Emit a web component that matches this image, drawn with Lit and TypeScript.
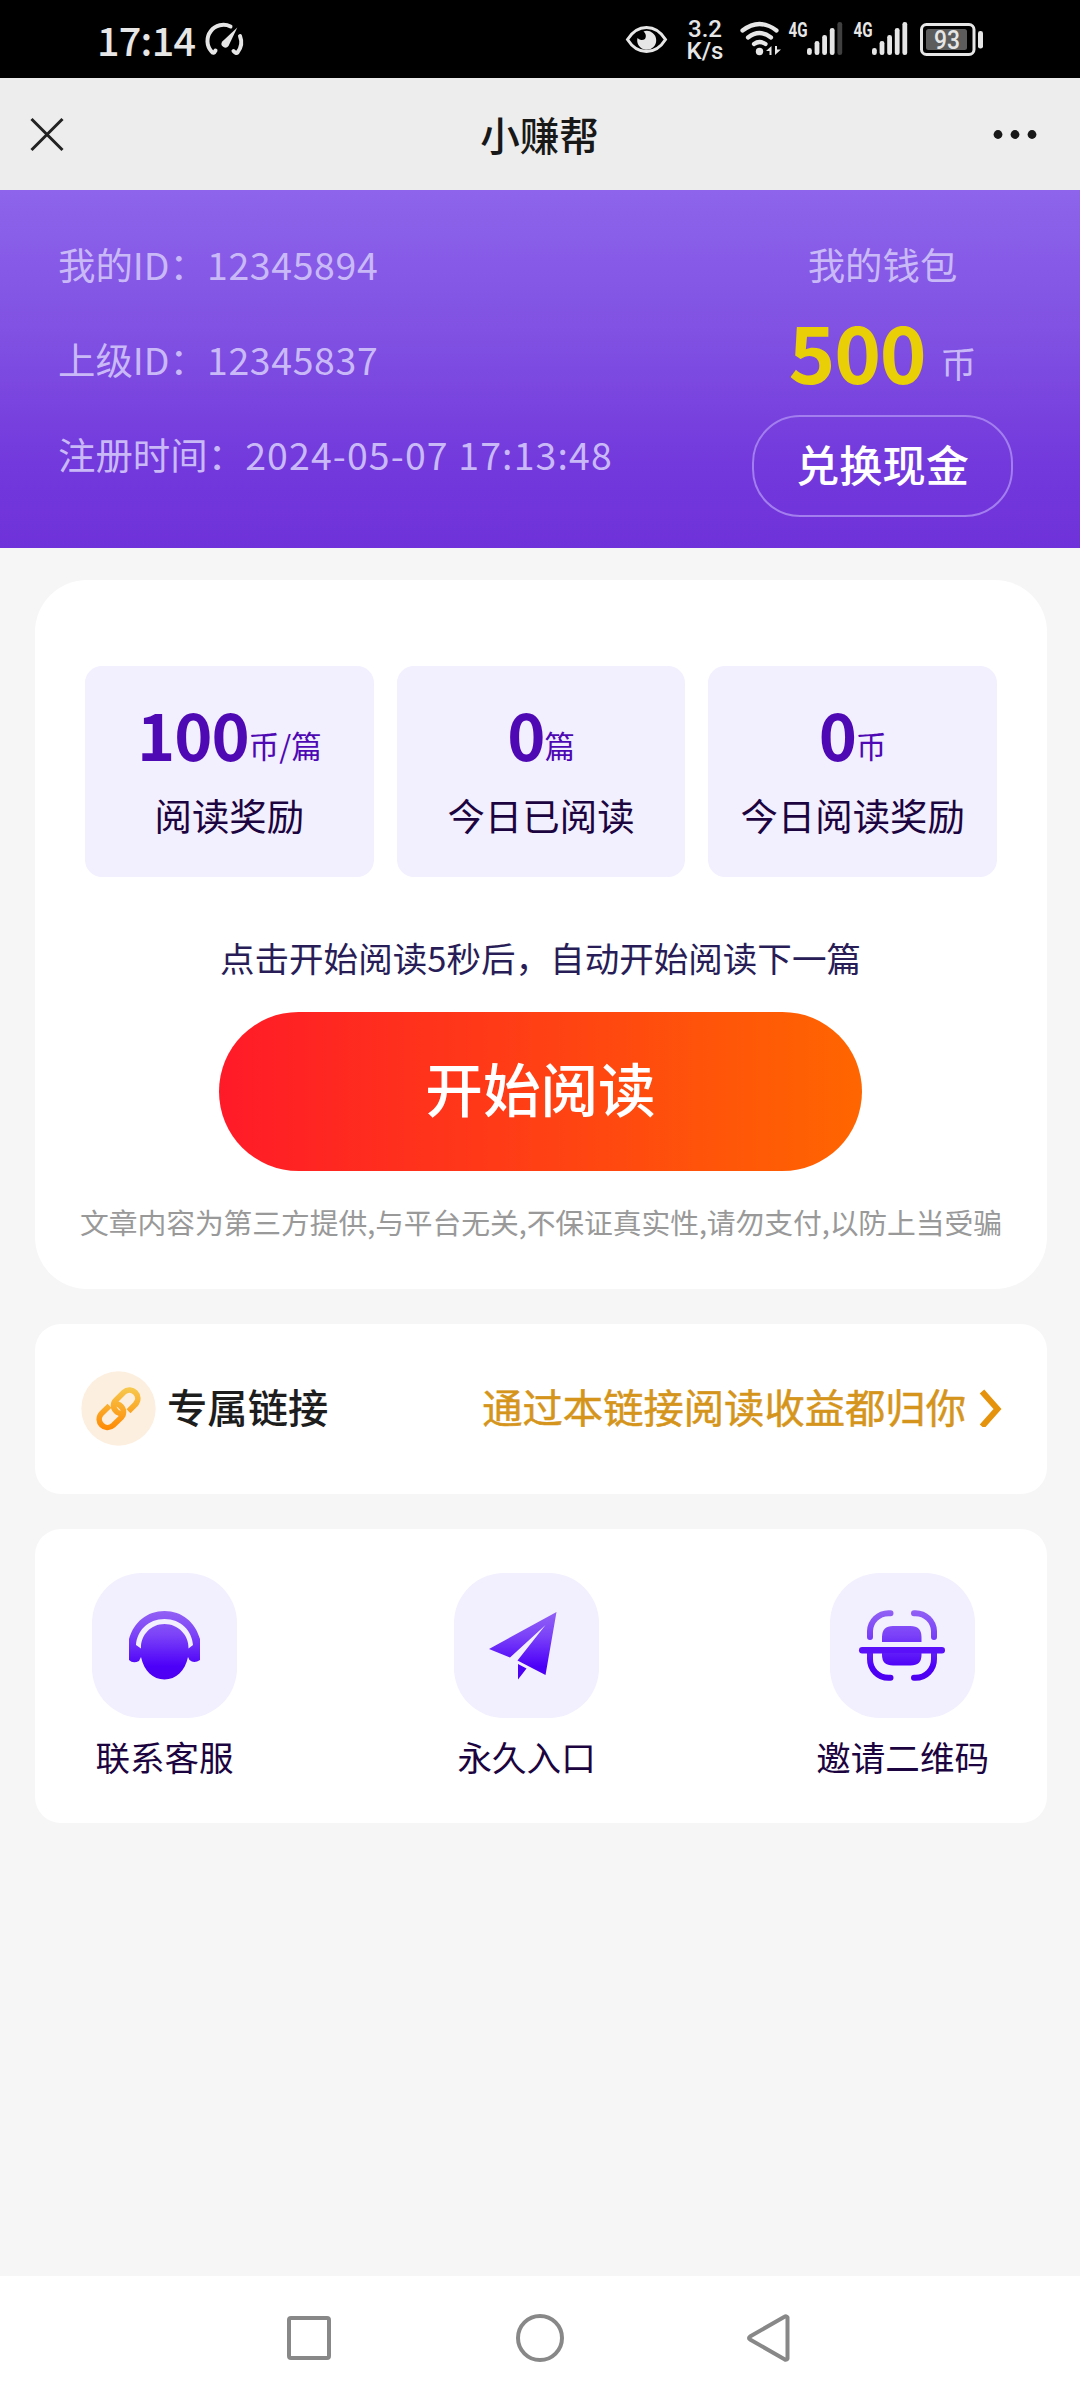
import { LitElement, html, css, svg } from "lit";
import { customElement, property } from "lit/decorators.js";

const purple = (id: string, y1: number, y2: number) => svg`
  <defs>
    <linearGradient id=${id} gradientUnits="userSpaceOnUse" x1="0" y1=${y1} x2="0" y2=${y2}>
      <stop offset="0" stop-color="#9261f5"></stop>
      <stop offset="0.35" stop-color="#7b42f8"></stop>
      <stop offset="0.8" stop-color="#4d00f8"></stop>
      <stop offset="1" stop-color="#4d00f0"></stop>
    </linearGradient>
  </defs>`;

@customElement("status-bar")
class StatusBar extends LitElement {
  static styles = css`
    :host { display: block; background: #000; }
    .bar { display: block; width: 1080px; height: 78px; }
    .t { font-family: "Noto Sans CJK SC", sans-serif; fill: #e6e6e6; }
    .clock { font-size: 39.5px; font-weight: 500; }
    .rate { font-size: 24px; font-weight: 500; font-family: Roboto, sans-serif; }
    .net { font-size: 20px; font-weight: 700; font-family: Roboto, sans-serif; }
    .pct { font-size: 25px; font-weight: 500; font-family: Roboto, sans-serif; }
  `;
  private signal(x: number, full: boolean) {
    const tops = [48, 41, 35, 28, 22];
    return tops.map(
      (y, i) => svg`<rect x=${x + i * 7.6} y=${y} width="4.8" height=${55 - y} rx="2.3"
        fill=${i === 4 && !full ? "#404040" : "#e6e6e6"}></rect>`
    );
  }
  render() {
    return html`<svg class="bar" viewBox="0 0 1080 78">
      <text class="t clock" x="97" y="55.5" textLength="99" lengthAdjust="spacing">17:14</text>
      <g fill="none" stroke="#e6e6e6" stroke-width="4" stroke-linecap="round">
        <path d="M215.500 50.500 Q213.500 54.500 211.500 51.500 A16 16 0 0 1 230.500 26.500"></path>
        <path d="M240 36 Q243.500 45 237.500 52.500 Q236 54 233.500 51"></path>
      </g>
      <path d="M237.300 27.600 L228.500 46 A3.700 3.700 0 1 1 222.300 41.500 Z" fill="#e6e6e6"></path>
      <path d="M627.500 39.500 Q635 27.500 646.500 27.500 T665.500 39.500 Q658 51.500 646.500 51.500 T627.500 39.500 Z"
        fill="none" stroke="#e6e6e6" stroke-width="3"></path>
      <path d="M645 31 A9.500 9.500 0 1 1 637.500 38 A5.600 5.600 0 0 0 645 39 A5.500 5.500 0 0 0 643.500 31.500 Z" fill="#e6e6e6"></path>
      <text class="t rate"><tspan x="688" y="36.500">3.2</tspan><tspan x="686.500" y="59">K/s</tspan></text>
      <g fill="none" stroke="#e6e6e6" stroke-width="4.200" stroke-linecap="round">
        <path d="M742.500 30.500 Q759.500 17.500 776.500 30.500"></path>
        <path d="M748 37.500 Q759.500 28.500 771 37.500"></path>
        <path d="M754 44 Q759.500 40 765.500 44"></path>
      </g>
      <circle cx="759.500" cy="51.500" r="3.700" fill="#e6e6e6"></circle>
      <path d="M766 51 L771.500 46 V55 H769.500 V51 Z M775 46 V55 L781 49.500 H777 V46 Z" fill="#e6e6e6"></path>
      <text class="t net" x="788.500" y="36.500" textLength="19" lengthAdjust="spacingAndGlyphs">4G</text>
      ${this.signal(807, false)}
      <text class="t net" x="853.500" y="36.500" textLength="19" lengthAdjust="spacingAndGlyphs">4G</text>
      ${this.signal(872, true)}
      <rect x="921.500" y="24.500" width="52.500" height="30" rx="5" fill="none" stroke="#e6e6e6" stroke-width="3"></rect>
      <rect x="926" y="29" width="41" height="21" rx="2.500" fill="#5c5c5c"></rect>
      <rect x="978" y="31" width="5" height="17.500" rx="2.300" fill="#e6e6e6"></rect>
      <text class="t pct" x="934" y="48.800" textLength="26" lengthAdjust="spacingAndGlyphs">93</text>
    </svg>`;
  }
}

@customElement("title-bar")
class TitleBar extends LitElement {
  static styles = css`
    :host { display: block; }
    .bar { display: flex; align-items: center; justify-content: space-between; box-sizing: border-box;
      height: 112px; padding: 0 40px 0 28px; background: #ededed; }
    .side { width: 48px; height: 38px; }
    .name { font-size: 39.6px; line-height: 60px; font-weight: 500; color: #181818; padding-left: 11px; }
  `;
  render() {
    return html`<div class="bar">
      <svg class="side" viewBox="0 0 48 38"><path d="M3.500 4 L34.500 35 M34.500 4 L3.500 35" stroke="#222" stroke-width="3" fill="none"></path></svg>
      <span class="name">小赚帮</span>
      <svg class="side" viewBox="0 0 48 38" fill="#181818"><circle cx="6" cy="19.500" r="4.400"></circle><circle cx="23" cy="19.500" r="4.400"></circle><circle cx="40" cy="19.500" r="4.400"></circle></svg>
    </div>`;
  }
}

@customElement("account-header")
class AccountHeader extends LitElement {
  static styles = css`
    :host { display: block; }
    .head { display: flex; justify-content: space-between; box-sizing: border-box; height: 358px;
      padding: 25px 67px 0 58px; color: #c9b9f7;
      background: linear-gradient(#8d64eb 0%, #8152e3 38%, #7339dc 76%, #6f32da 100%); }
    .rows { display: flex; flex-direction: column; padding-top: 1.5px; }
    .row { font-size: 37.44px; line-height: 95px; white-space: pre; }
    .num { letter-spacing: 0.65px; }
    .date { letter-spacing: 1.15px; }
    .wallet { display: flex; flex-direction: column; align-items: center; width: 261px; padding-top: 19px; }
    .label { font-size: 37.44px; line-height: 60px; }
    .amount { display: flex; align-items: baseline; gap: 15px; margin-top: 11px; height: 90px; line-height: 90px; }
    .coins { font-size: 79.5px; font-weight: 700; letter-spacing: -1.2px; color: #e9cf05; }
    .unit { font-size: 36px; line-height: 60px; padding-bottom: 3px; align-self: flex-end; }
    .cash { box-sizing: border-box; width: 261px; height: 102px; margin-top: 20px; border: 2px solid #a37eee;
      border-radius: 48px; color: #fff; font: inherit; font-size: 43.2px; font-weight: 500; background: none;
      padding: 0 0 6px; text-align: center; }
  `;
  render() {
    const rows = [
      ["我的ID：", "12345894", "num"],
      ["上级ID：", "12345837", "num"],
      ["注册时间：", "2024-05-07 17:13:48", "date"],
    ];
    return html`<div class="head">
      <div class="rows">${rows.map(([k, v, c]) => html`<div class="row">${k}<span class=${c}>${v}</span></div>`)}</div>
      <div class="wallet">
        <div class="label">我的钱包</div>
        <div class="amount"><span class="coins">500</span><span class="unit">币</span></div>
        <button class="cash">兑换现金</button>
      </div>
    </div>`;
  }
}

@customElement("stat-tile")
class StatTile extends LitElement {
  @property() value = "";
  @property() unit = "";
  @property() label = "";
  static styles = css`
    :host { display: block; flex: 1; }
    .tile { display: flex; flex-direction: column; align-items: center; box-sizing: border-box; height: 211px;
      padding-top: 27px; border-radius: 17px; background: #f2effe; }
    .top { display: flex; height: 80px; color: #4e08b4; }
    .value { font-size: 64.8px; line-height: 80px; font-weight: 700; letter-spacing: -1px; }
    .unit { font-size: 30.5px; line-height: 104px; height: 80px; }
    .label { font-size: 37.44px; line-height: 60px; margin-top: 12px; color: #1c0440; white-space: nowrap; }
  `;
  render() {
    return html`<div class="tile">
      <div class="top"><span class="value">${this.value}</span><span class="unit">${this.unit}</span></div>
      <div class="label">${this.label}</div>
    </div>`;
  }
}

@customElement("reading-card")
class ReadingCard extends LitElement {
  static styles = css`
    :host { display: block; }
    .card { display: flex; flex-direction: column; align-items: center; box-sizing: border-box; height: 709px;
      padding-top: 86px; border-radius: 52px; background: #fff; }
    .stats { display: flex; gap: 23px; width: 912px; }
    .tip { font-size: 34.56px; line-height: 60px; margin: 50px 1px 0 0; color: #281d57; white-space: nowrap; }
    .start { width: 643px; height: 159px; margin: 25px 1px 0 0; border: 0; border-radius: 80px; padding: 0 0 9px;
      font: inherit; font-size: 57.6px; font-weight: 500; color: #fff;
      background: linear-gradient(90deg, #ff1a28, #ff6600); }
    .note { font-size: 28.8px; line-height: 44px; margin-top: 29px; letter-spacing: -0.08px; color: #999; white-space: nowrap; }
  `;
  render() {
    return html`<section class="card">
      <div class="stats">
        <stat-tile value="100" unit="币/篇" label="阅读奖励"></stat-tile>
        <stat-tile value="0" unit="篇" label="今日已阅读"></stat-tile>
        <stat-tile value="0" unit="币" label="今日阅读奖励"></stat-tile>
      </div>
      <div class="tip">点击开始阅读5秒后，自动开始阅读下一篇</div>
      <button class="start">开始阅读</button>
      <div class="note">文章内容为第三方提供,与平台无关,不保证真实性,请勿支付,以防上当受骗</div>
    </section>`;
  }
}

@customElement("link-card")
class LinkCard extends LitElement {
  static styles = css`
    :host { display: block; }
    .card { display: flex; align-items: center; box-sizing: border-box; height: 170px; padding: 0 45px 2px 46px;
      border-radius: 26px; background: #fff; font-size: 40.32px; line-height: 60px; }
    .icon { width: 75px; height: 75px; }
    .name { margin-left: 11px; padding-bottom: 4px; font-weight: 500; color: #1d1d1d; }
    .hint { margin-left: auto; padding-bottom: 4px; color: #d5951c; -webkit-text-stroke: 0.5px #d5951c; }
    .arrow { width: 24px; height: 38px; margin-left: 12px; }
  `;
  render() {
    return html`<section class="card">
      <svg class="icon" viewBox="0 0 75 75">
        <defs><linearGradient id="gold" gradientUnits="userSpaceOnUse" x1="0" y1="15" x2="0" y2="60">
          <stop offset="0" stop-color="#f6cb52"></stop><stop offset="1" stop-color="#ff8800"></stop></linearGradient></defs>
        <circle cx="37.500" cy="37.500" r="37.200" fill="#fdefdf"></circle>
        <g fill="none" stroke="url(#gold)" stroke-width="5.600">
          <path d="M40.500 43.200 L36.200 41.200 C31.500 37.500 31.500 32.500 34.800 29.200 L42.800 21.300 C50.500 14.300 62 25 54.200 33.500 L47.500 40.200"></path>
          <path d="M34.800 32.200 L38.800 34.200 C43.500 38 43.500 43 40.200 46.500 L32.200 54.300 C24.500 61.300 13 50.500 20.800 42.200 L28.500 34.800"></path>
        </g>
      </svg>
      <span class="name">专属链接</span>
      <span class="hint">通过本链接阅读收益都归你</span>
      <svg class="arrow" viewBox="0 0 24 38"><path d="M4 2.500 L19.500 20 L4 37.500" fill="none" stroke="#e5930c" stroke-width="6"></path></svg>
    </section>`;
  }
}

@customElement("menu-card")
class MenuCard extends LitElement {
  static styles = css`
    :host { display: block; }
    .card { display: flex; justify-content: space-between; box-sizing: border-box; height: 294px;
      padding: 44px 58px 0 57px; border-radius: 26px; background: #fff; }
    .item { display: flex; flex-direction: column; align-items: center; }
    .tile { width: 145px; height: 145px; border-radius: 50px; background: #f2effe; }
    .label { font-size: 34.56px; line-height: 54px; margin-top: 11px; color: #1c0440; white-space: nowrap; }
  `;
  render() {
    const headset = svg`${purple("ga", 38, 107)}
      <path fill="url(#ga)" d="M37 66 C42 49 55 38 72.500 38 C90 38 103 49 108 66 V87 Q102 91 97.500 87 L96 84 C93 98 84 106.500 72.500 106.500 C61 106.500 52 98 49 84 L47 88 Q41 91 37 87 Z"></path>
      <path fill="#f2effe" d="M44 72 C45 58 56 46 72.500 46 C89 46 100 58 101 72 L96.500 75.500 C97 62 86 51 72.500 51 C59 51 48.500 62 49 75.500 Z"></path>`;
    const plane = svg`${purple("gb", 39, 107)}
      <path fill="url(#gb)" d="M35 76 L102.500 39 L91.500 102 L63.500 87.500 L91.500 52 L56 84.500 Z M64 91 L72.500 95.500 L64 106.500 Z"></path>`;
    const scan = svg`${purple("gc", 37, 108)}
      <g fill="none" stroke="url(#gc)" stroke-width="6" stroke-linecap="round">
        <path d="M40 64 V58 A18.500 18.500 0 0 1 58.500 40.200 H60.500"></path>
        <path d="M84 40.200 H85.500 A18.500 18.500 0 0 1 104 58 V64"></path>
        <path d="M40 79 V86 A18.500 18.500 0 0 0 58.500 104.800 H60.500"></path>
        <path d="M84 104.800 H85.500 A18.500 18.500 0 0 0 104 86 V79"></path>
      </g>
      <rect x="29" y="74" width="86" height="6.500" rx="3.200" fill="#5a10f9"></rect>
      <path fill="url(#gc)" d="M52 69 V64 Q52 53 63 53 H80.500 Q91.500 53 91.500 64 V69 Z M52 80 H91.500 V82 Q91.500 92.500 80.500 92.500 H63 Q52 92.500 52 82 Z"></path>`;
    const items = [
      { icon: headset, label: "联系客服" },
      { icon: plane, label: "永久入口" },
      { icon: scan, label: "邀请二维码" },
    ];
    return html`<section class="card">${items.map(
      (i) => html`<div class="item"><svg class="tile" viewBox="0 0 145 145">${i.icon}</svg><span class="label">${i.label}</span></div>`
    )}</section>`;
  }
}

@customElement("system-nav")
class SystemNav extends LitElement {
  static styles = css`
    :host { display: block; }
    .nav { display: flex; justify-content: center; align-items: center; gap: 180px; height: 124px; background: #fff; }
    .key { width: 50px; height: 50px; fill: none; stroke: #888; stroke-width: 4; stroke-linejoin: round; }
  `;
  render() {
    return html`<nav class="nav">
      <svg class="key" viewBox="0 0 50 50"><rect x="4" y="5" width="40" height="40" rx="2"></rect></svg>
      <svg class="key" viewBox="0 0 50 50"><circle cx="25" cy="25" r="22"></circle></svg>
      <svg class="key" viewBox="0 0 50 50"><path d="M39.500 3.800 Q41.500 2.500 42.500 4.500 V45.500 Q41.500 47.500 39.500 46.200 L5 26.500 Q3 25 5 23.500 Z"></path></svg>
    </nav>`;
  }
}

@customElement("app-root")
class AppRoot extends LitElement {
  static styles = css`
    :host { display: block; font-family: "Noto Sans CJK SC", sans-serif; }
    .page { display: flex; flex-direction: column; width: 1080px; height: 2400px; background: #f6f6f6; overflow: hidden; }
    .cards { display: flex; flex-direction: column; gap: 35px; flex: 1; padding: 32px 33px 0 35px; }
  `;
  render() {
    return html`<div class="page">
      <status-bar></status-bar>
      <title-bar></title-bar>
      <account-header></account-header>
      <main class="cards">
        <reading-card></reading-card>
        <link-card></link-card>
        <menu-card></menu-card>
      </main>
      <system-nav></system-nav>
    </div>`;
  }
}
